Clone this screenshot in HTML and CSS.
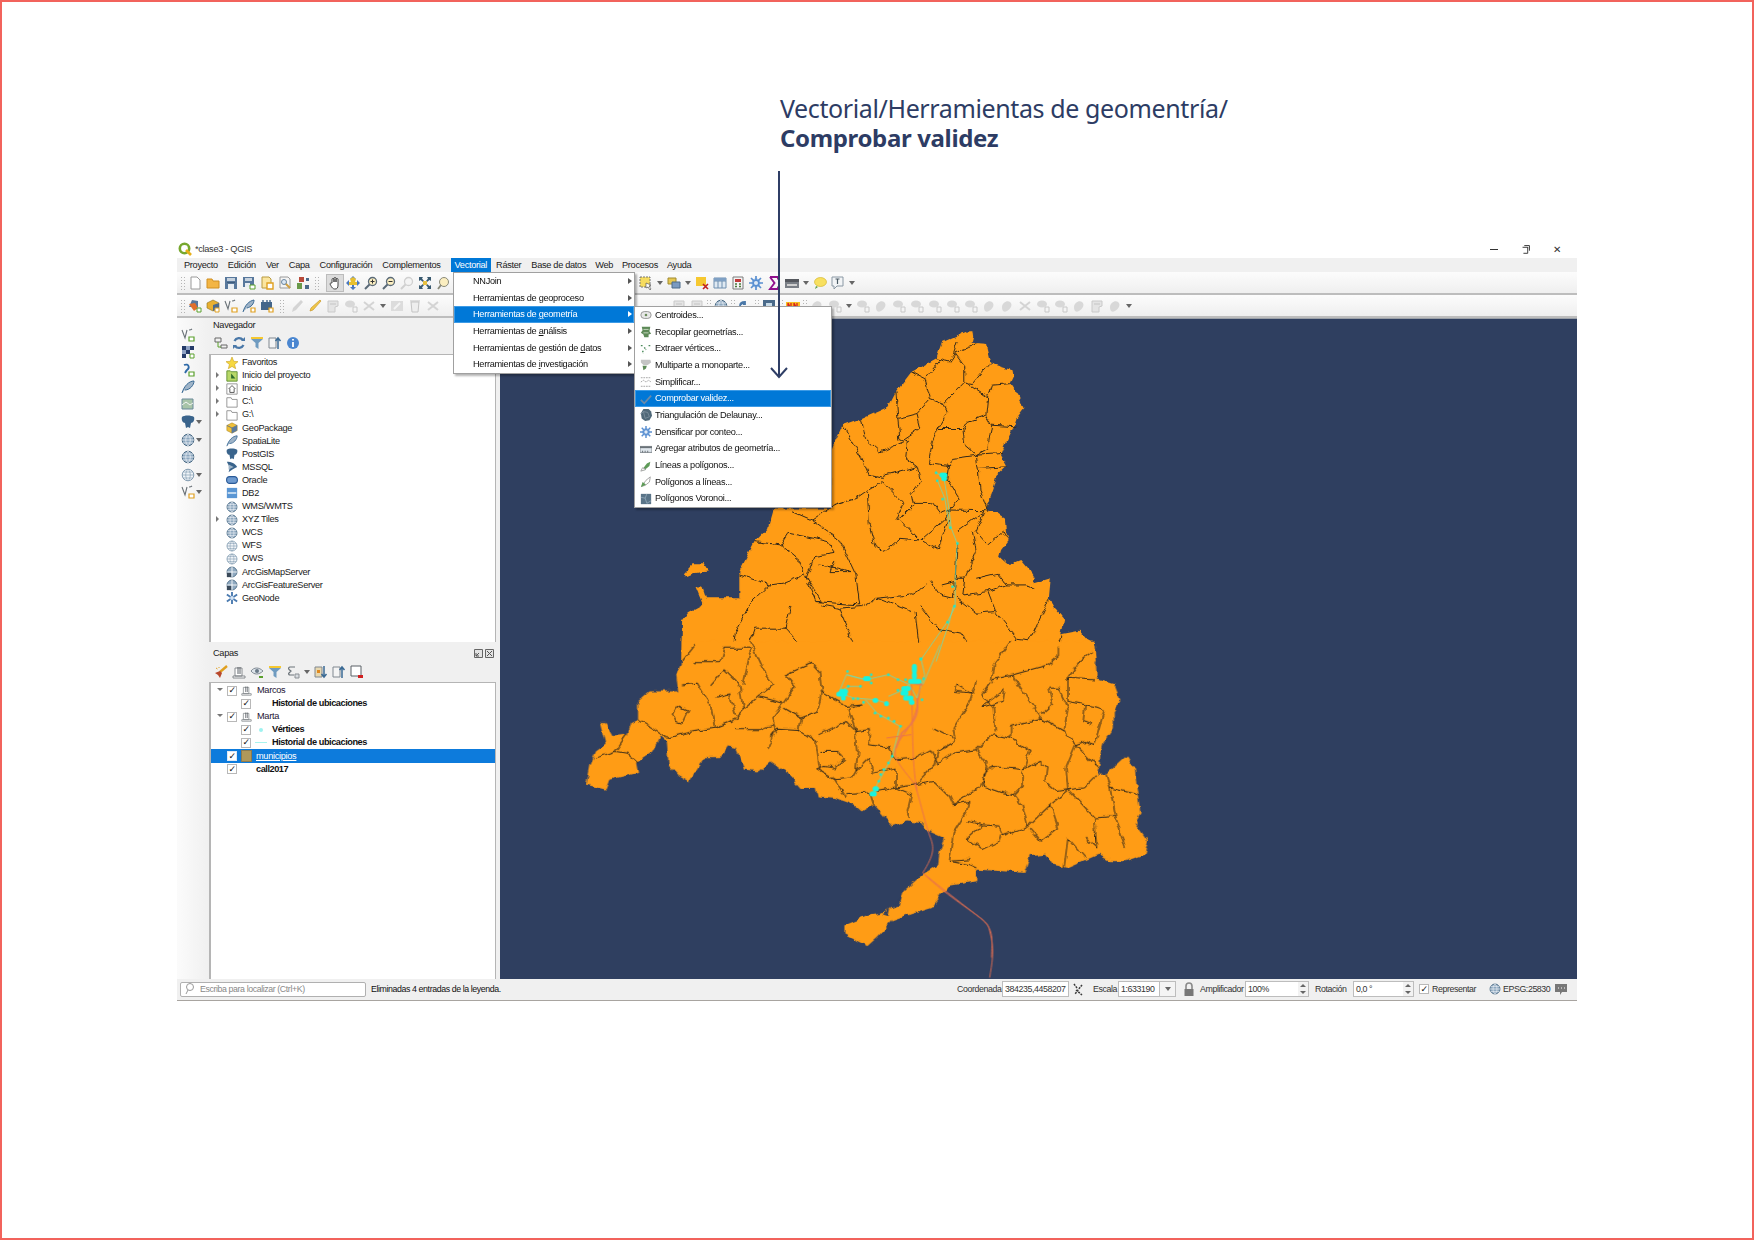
FILE: index.html
```html
<!DOCTYPE html>
<html lang="es">
<head>
<meta charset="utf-8">
<title>Comprobar validez</title>
<link rel="stylesheet" href="styles.css">
</head>
<body>
<svg class="sprite" aria-hidden="true">
<symbol id="doc" viewBox="0 0 14 14"><path d="M3 1h6l3 3v9H3z" fill="#fff" stroke="#9a9a9a"/></symbol>
<symbol id="folder" viewBox="0 0 14 14"><path d="M1 3h5l1 2h6v7H1z" fill="#f3b544" stroke="#d08f20"/></symbol>
<symbol id="save" viewBox="0 0 14 14"><path d="M1 1h12v12H1z" fill="#58789c"/><path d="M3 2h8v3H3z" fill="#c6d2de"/><path d="M4 8h6v5H4z" fill="#e8edf2"/><path d="M3 6h8v1H3z" fill="#3f5c7c"/></symbol>
<symbol id="saveas" viewBox="0 0 14 14"><path d="M1 1h11v10H1z" fill="#58789c"/><path d="M3 2h7v3H3z" fill="#c6d2de"/><path d="M3 7h5v4H3z" fill="#e8edf2"/><path d="M8 9h5v4H8z" fill="#fff" stroke="#5aa02c"/></symbol>
<symbol id="ydoc" viewBox="0 0 14 14"><path d="M2 1h7l2 2v9H2z" fill="#fbe6a0" stroke="#b89a40"/><path d="M7 7h6v6H7z" fill="#fff" stroke="#e0a020" stroke-width="1.400"/></symbol>
<symbol id="prop" viewBox="0 0 14 14"><path d="M2 1h8l2 2v9H2z" fill="#f4f4f4" stroke="#9a9a9a"/><path d="M6 6l6 6" stroke="#d0a040" stroke-width="2"/><circle cx="6" cy="6" r="2.500" fill="#dbe8f4" stroke="#6a86a0"/></symbol>
<symbol id="style" viewBox="0 0 14 14"><path d="M3 1h5v5H3z" fill="#b84a3a"/><path d="M1 7h5v6H1z" fill="#6a9a4a"/><path d="M10 2h3v3h-3zM9 9h4v4H9z" fill="#4a6a8a"/></symbol>
<symbol id="hand" viewBox="0 0 14 14"><path d="M4 7V3.500a1 1 0 0 1 2 0V6V2.500a1 1 0 0 1 2 0V6V3.500a1 1 0 0 1 2 0V9c0 3-1 4-3 4s-3-1-5-5c0-1 1-1 2-1z" fill="#fff" stroke="#333" stroke-width=".9"/></symbol>
<symbol id="move" viewBox="0 0 14 14"><path d="M7 0l3 3H8v3h3V4l3 3-3 3V8H8v3h2l-3 3-3-3h2V8H3v2L0 7l3-3v2h3V3H4z" fill="#4a78c0"/><path d="M4 3l3-2 3 2-1 3h2v3H3V6h2z" fill="#e8c030"/></symbol>
<symbol id="zin" viewBox="0 0 14 14"><circle cx="8.500" cy="5.500" r="4" fill="#fbeec0" stroke="#5a6a78" stroke-width="1.300"/><path d="M5.500 8.500L1 13" stroke="#5a6a78" stroke-width="2"/><path d="M6.500 5.500h4M8.500 3.500v4" stroke="#333"/></symbol>
<symbol id="zout" viewBox="0 0 14 14"><circle cx="8.500" cy="5.500" r="4" fill="#fbeec0" stroke="#5a6a78" stroke-width="1.300"/><path d="M5.500 8.500L1 13" stroke="#5a6a78" stroke-width="2"/><path d="M6.500 5.500h4" stroke="#333"/></symbol>
<symbol id="zdis" viewBox="0 0 14 14"><circle cx="8.500" cy="5.500" r="4" fill="#f4f4f4" stroke="#d0d0d0" stroke-width="1.300"/><path d="M5.500 8.500L1 13" stroke="#d0d0d0" stroke-width="2"/></symbol>
<symbol id="full" viewBox="0 0 14 14"><path d="M1 1h4L4 2.500 6 5 5 6 2.500 4 1 5zM13 1v4l-1.500-1L9 6 8 5l2-2.500L9 1zM1 13V9l1.500 1L5 8l1 1-2 2.500L5 13zM13 13H9l1-1.500L8 9l1-1 2.500 2L13 9z" fill="#3a5a70"/><path d="M5 5h4v4H5z" fill="#e8c040"/></symbol>
<symbol id="bubble" viewBox="0 0 14 14"><circle cx="8" cy="6" r="4.500" fill="#fbeec0" stroke="#8a8a7a"/><path d="M5 9l-3 4" stroke="#8a8a7a" stroke-width="1.800"/></symbol>
<symbol id="ybub" viewBox="0 0 14 14"><ellipse cx="7.500" cy="6" rx="6" ry="4.500" fill="#f8e060" stroke="#d0b020" stroke-width=".6"/><path d="M3 10l-1 3 3-2z" fill="#5a9a3a"/></symbol>
<symbol id="tbub" viewBox="0 0 14 14"><path d="M1 1h11v9H6l-3 3v-3H1z" fill="#f2f4f6" stroke="#8a98a4"/><path d="M4.500 3h4M6.500 3v5" stroke="#4a5a64" stroke-width="1.200"/></symbol>
<symbol id="selbox" viewBox="0 0 14 14"><path d="M1 1h10v10H1z" fill="#f6dc60" stroke="#777" stroke-dasharray="2 1"/><path d="M7 7l5 2-2 1 2 3-1 1-2-3-2 1z" fill="#fff" stroke="#444" stroke-width=".6"/></symbol>
<symbol id="layers" viewBox="0 0 14 14"><path d="M1 2h8v6H1z" fill="#e6c850" stroke="#a08a30"/><path d="M5 6h8v6H5z" fill="#7a9ac0" stroke="#4a6a8a"/></symbol>
<symbol id="addlay" viewBox="0 0 14 14"><path d="M4 1l6 1v6H1z" fill="#58789c"/><path d="M1 5l6-1 3 5-4 3z" fill="#e0702c"/><path d="M9 9h4v4H9z" fill="#fff" stroke="#5aa02c"/></symbol>
<symbol id="addgpkg" viewBox="0 0 14 14"><path d="M7 1l6 3v5l-6 3-6-3V4z" fill="#e8b030" stroke="#8a7020" stroke-width=".6"/><path d="M7 6l6-2v5l-6 3z" fill="#4a6a8c"/><path d="M9 9h4v4H9z" fill="#fff" stroke="#e0a020"/></symbol>
<symbol id="addfeather" viewBox="0 0 14 14"><path d="M1 13C3 6 7 2 12 1c0 4-3 7-7 8" fill="#9fb4c8" stroke="#3a6a94"/><path d="M9 9h4v4H9z" fill="#fff" stroke="#e0a020" stroke-width="1.200"/></symbol>
<symbol id="addtab" viewBox="0 0 14 14"><path d="M1 3h11v8H1z" fill="#44668a"/><path d="M3 1v3M7 1v3M10 1v3" stroke="#44668a" stroke-width="1.400"/><path d="M9 9h4v4H9z" fill="#fff" stroke="#e0a020" stroke-width="1.200"/></symbol>
<symbol id="ybox" viewBox="0 0 14 14"><path d="M1 1h10v9H1z" fill="#f6c830"/><path d="M8 8l5 5M13 8l-5 5" stroke="#c02020" stroke-width="1.600"/></symbol>
<symbol id="table" viewBox="0 0 14 14"><path d="M1 2h12v10H1z" fill="#dfe9f2" stroke="#6f8fb0"/><path d="M1 5h12M5 2v10M9 2v10" stroke="#6f8fb0"/><path d="M1 2h12v3H1z" fill="#7fa0c4"/></symbol>
<symbol id="calc" viewBox="0 0 14 14"><path d="M2 1h10v12H2z" fill="#f4f4f4" stroke="#7a7a7a"/><path d="M4 3h6v3H4z" fill="#c03a3a"/><path d="M4 8h2M8 8h2M4 10.500h2M8 10.500h2" stroke="#4a7a3a" stroke-width="1.400"/></symbol>
<symbol id="gear" viewBox="0 0 14 14"><circle cx="7" cy="7" r="3.800" fill="#5a8fd0" stroke="#8fb8e8" stroke-width="1.200"/><path d="M7 0v14M0 7h14M2 2l10 10M12 2L2 12" stroke="#5a8fd0" stroke-width="1.700"/><circle cx="7" cy="7" r="2" fill="#dfeaf6"/></symbol>
<symbol id="sigma" viewBox="0 0 14 14"><path d="M3 1h8v2.500M3 1l4.500 6L3 13h8v-2.500" fill="none" stroke="#90108c" stroke-width="1.900"/></symbol>
<symbol id="bar" viewBox="0 0 14 14"><path d="M0 3h14v9H0z" fill="#7a7f86"/><path d="M0 3h14v3H0z" fill="#55585e"/><path d="M2 8h10v2H2z" fill="#d0d0d0"/></symbol>
<symbol id="vadd" viewBox="0 0 14 14"><path d="M1 2l3 8 2-8M8 2c2 0 3-1 3-1" fill="none" stroke="#6a7278" stroke-width="1.100"/><path d="M8 9h5v4H8z" fill="#fff" stroke="#5aa02c" stroke-width="1.200"/></symbol>
<symbol id="vaddy" viewBox="0 0 14 14"><path d="M1 2l3 8 2-8M8 2c2 0 3-1 3-1" fill="none" stroke="#6a7278" stroke-width="1.100"/><path d="M8 9h5v4H8z" fill="#fff" stroke="#e0a020" stroke-width="1.200"/></symbol>
<symbol id="raster" viewBox="0 0 14 14"><path d="M1 1h4v4H1zM5 5h4v4H5zM1 9h4v4H1zM9 1h4v4H9z" fill="#243a68"/><path d="M5 1h4v4H5zM1 5h4v4H1z" fill="#8fa2c4"/><path d="M9 9h4v4H9z" fill="#fff" stroke="#5aa02c"/></symbol>
<symbol id="swirl" viewBox="0 0 14 14"><path d="M3 2c5-2 6 3 3 5 0 0-1 1-2 3" fill="none" stroke="#2f6aa8" stroke-width="1.800"/><path d="M8 9h5v4H8z" fill="#fff" stroke="#5aa02c" stroke-width="1.200"/></symbol>
<symbol id="feather" viewBox="0 0 14 14"><path d="M1 13C3 6 8 1 13 1c0 4-4 9-9 9" fill="#9fb4c8" stroke="#3a6a94"/></symbol>
<symbol id="vmesh" viewBox="0 0 14 14"><path d="M1 1h11v10H1z" fill="#a8c4a8" stroke="#6a8a9a"/><path d="M1 7l4-3 4 3 3-2" fill="none" stroke="#f4f4f4"/></symbol>
<symbol id="elephant" viewBox="0 0 14 14"><path d="M1 2c2-2 9-2 12 0 1 3-1 6-3 6l-1 5-2-1-2 1-1-5C2 8 0 5 1 2z" fill="#3a648c"/></symbol>
<symbol id="globe" viewBox="0 0 14 14"><circle cx="7" cy="7" r="5.800" fill="#8fa9c0" stroke="#4a6a84"/><path d="M1 7h12M7 1c-3 3-3 9 0 12M7 1c3 3 3 9 0 12M2 4h10M2 10h10" fill="none" stroke="#e8eef4" stroke-width=".8"/></symbol>
<symbol id="globeg" viewBox="0 0 14 14"><circle cx="7" cy="7" r="5.800" fill="#f0f4f8" stroke="#88a0b4"/><path d="M1 7h12M7 1c-3 3-3 9 0 12M7 1c3 3 3 9 0 12M2 4h10M2 10h10" fill="none" stroke="#88a0b4" stroke-width=".7"/></symbol>
<symbol id="star" viewBox="0 0 14 14"><path d="M7 0l2 5 5 .4-4 3.300 1.300 5L7 11l-4.300 2.700L4 8.700 0 5.400 5 5z" fill="#f6d840" stroke="#c8a020" stroke-width=".7"/></symbol>
<symbol id="proj" viewBox="0 0 14 14"><path d="M1 1h4l1 1h7v11H1z" fill="#b8d868" stroke="#5a8a2c"/><path d="M6 4l5 6H6z" fill="#2c6a2c"/></symbol>
<symbol id="home" viewBox="0 0 14 14"><path d="M1 1h12v12H1z" fill="#fff" stroke="#8a8a8a"/><path d="M3 7l4-4 4 4M4.500 6.500V11h5V6.500" fill="none" stroke="#444"/></symbol>
<symbol id="fold" viewBox="0 0 14 14"><path d="M1 2h5l1 2h6v9H1z" fill="#fff" stroke="#8a8a8a"/></symbol>
<symbol id="gpkg" viewBox="0 0 14 14"><path d="M7 1l6 3v6l-6 3-6-3V4z" fill="#f0c038" stroke="#a08020" stroke-width=".6"/><path d="M1 4l6 3 6-3M7 7v6" stroke="#58708a" fill="none"/><path d="M7 7l6-3v6l-6 3z" fill="#5a7a9c"/></symbol>
<symbol id="mssql" viewBox="0 0 14 14"><path d="M1 1c5 0 10 2 12 6-3 1-7 4-10 6 1-3 2-6 0-8z" fill="#3a648c"/><path d="M3 4l6 3-6 3z" fill="#9fb4c8"/></symbol>
<symbol id="oracle" viewBox="0 0 14 14"><rect x=".7" y="3" width="12.600" height="8" rx="3.600" fill="#6f9bd0" stroke="#2a5a98" stroke-width="1.300"/></symbol>
<symbol id="db2" viewBox="0 0 14 14"><path d="M1 1h12v12H1z" fill="#5a96d4"/><path d="M2 6h10v2H2z" fill="#cfe2f4"/></symbol>
<symbol id="mapserv" viewBox="0 0 14 14"><circle cx="7" cy="7" r="5.800" fill="#8fa9c0" stroke="#4a6a84"/><path d="M1 7h12M7 1v12" stroke="#fff"/><path d="M1 8h5v5H1z" fill="#3a4a5a"/></symbol>
<symbol id="node" viewBox="0 0 14 14"><path d="M7 0v14M1 3l12 8M13 3L1 11" stroke="#4a7ab0" stroke-width="2.200"/><circle cx="7" cy="7" r="2.200" fill="#d4e4f4"/></symbol>
<symbol id="group" viewBox="0 0 14 14"><path d="M1 11h12v2H1zM3 3h7v8H3z" fill="#fff" stroke="#7a7f84" stroke-width=".9"/><path d="M6 2v7M8 2v7" stroke="#5a6066"/></symbol>
<symbol id="filter" viewBox="0 0 14 14"><path d="M1 1h12v2L8.500 7v6l-3-2V7L1 3z" fill="#6f9bc0"/><path d="M1 1h12v2H1z" fill="#f6c830"/></symbol>
<symbol id="refresh" viewBox="0 0 14 14"><path d="M11 4A5 5 0 0 0 2.500 5M3 10a5 5 0 0 0 8.500-1" fill="none" stroke="#4a78a8" stroke-width="2.200"/><path d="M9 5h4V1zM5 9H1v4z" fill="#4a78a8"/></symbol>
<symbol id="info" viewBox="0 0 14 14"><circle cx="7" cy="7" r="6" fill="#4a86d0"/><path d="M7 3v1.500M7 6v5" stroke="#fff" stroke-width="1.800"/></symbol>
<symbol id="collapse" viewBox="0 0 14 14"><path d="M1 2h6v4H1zM7 9h6v3H7z" fill="none" stroke="#666"/><path d="M4 6v5h3" fill="none" stroke="#5aa02c"/></symbol>
<symbol id="expandall" viewBox="0 0 14 14"><path d="M1 2h7v10H1z" fill="#f4f4f4" stroke="#808890"/><path d="M10 13V3M7.500 5L10 2l2.500 3" fill="none" stroke="#3a6a94" stroke-width="1.500"/></symbol>
<symbol id="collall" viewBox="0 0 14 14"><path d="M1 2h7v10H1z" fill="#e8d8b0" stroke="#808890"/><path d="M10 1v10M7.500 9l2.500 3 2.500-3" fill="none" stroke="#3a6a94" stroke-width="1.500"/><path d="M3 5h3v3H3z" fill="#e08a20"/></symbol>
<symbol id="brush" viewBox="0 0 14 14"><path d="M13 1L6 7" stroke="#e0a020" stroke-width="2.400"/><path d="M1 8l5-2 2 2-2 5-2-3z" fill="#b8482c"/><path d="M2 3l1.500 1M5 2v1" stroke="#e0a020"/></symbol>
<symbol id="eye" viewBox="0 0 14 14"><path d="M1 6c3-4 8-4 12 0-4 4-9 4-12 0z" fill="#dde4ea" stroke="#808a94"/><circle cx="7" cy="6" r="2" fill="#6a7a88"/><path d="M9 11h4v2H9z" fill="#5aa02c"/></symbol>
<symbol id="expr" viewBox="0 0 14 14"><path d="M9 2H4c-1 0-2 1-1 2.500L5 6 3 8c-1 1 0 2 1 2h4" fill="none" stroke="#6a7278" stroke-width="1.200"/><path d="M9 9h4v4H9z" fill="#d8dce0" stroke="#8a8f94"/></symbol>
<symbol id="rembox" viewBox="0 0 14 14"><path d="M1 1h10v10H1z" fill="#fff" stroke="#5a6066"/><path d="M8 10h5v3H8z" fill="#d02020"/></symbol>
<symbol id="g1" viewBox="0 0 14 14"><ellipse cx="6" cy="5" rx="5" ry="3.600" fill="#d8d8d8"/><path d="M9 8h4v5H9z" fill="#f4f4f4" stroke="#c8c8c8"/></symbol>
<symbol id="g2" viewBox="0 0 14 14"><path d="M2 8c0-4 5-7 8-5s1 7-3 9-5-1-5-4z" fill="#d8d8d8"/></symbol>
<symbol id="g3" viewBox="0 0 14 14"><path d="M2 2h10v5l-3 1v5H2z" fill="#e4e4e4" stroke="#cacaca"/><path d="M4 5h6" stroke="#c4c4c4"/></symbol>
<symbol id="g4" viewBox="0 0 14 14"><path d="M2 3l10 8M2 11l10-8" fill="none" stroke="#d4d4d4" stroke-width="2"/></symbol>
<symbol id="gpen" viewBox="0 0 14 14"><path d="M11 1l2 2-7 8-4 2 1-4z" fill="#d4d4d4"/></symbol>
<symbol id="gsq" viewBox="0 0 14 14"><path d="M1 2h12v10H1z" fill="#dcdcdc"/><path d="M4 10l6-6" stroke="#f4f4f4" stroke-width="2"/></symbol>
<symbol id="pencil" viewBox="0 0 14 14"><path d="M12 1l1 1-8 9-3 1 1-3z" fill="#f0c848" stroke="#c8982c" stroke-width=".7"/></symbol>
<symbol id="trash" viewBox="0 0 14 14"><path d="M3 3h8l-1 10H4zM2 2h10" fill="#eee" stroke="#c4c4c4"/></symbol>
<symbol id="python" viewBox="0 0 14 14"><path d="M2 7c0-3 2-4 5-4v2H5" fill="#4a78a8" stroke="#4a78a8" stroke-width="1.800"/><path d="M12 7c0 3-2 4-5 4V9h2" fill="#f0c838" stroke="#f0c838" stroke-width="1.800"/></symbol>
<symbol id="bluebox" viewBox="0 0 14 14"><path d="M1 1h12v12H1z" fill="#4a6a8a"/><path d="M4 4h6v6H4z" fill="#c8dbe8"/></symbol>
<symbol id="nn" viewBox="0 0 14 14"><path d="M0 3h14v8H0z" fill="#f8c020"/><path d="M2 10V4l3 6V4M8 10V4l3 6V4" fill="none" stroke="#d82020" stroke-width="1.300"/></symbol>
<symbol id="centroid" viewBox="0 0 14 14"><rect x="1" y="3" width="12" height="8" rx="4" fill="#e8e8e8" stroke="#8a8a8a"/><circle cx="7" cy="7" r="1.500" fill="#6a8a5a"/></symbol>
<symbol id="collect" viewBox="0 0 14 14"><path d="M2 1h10l-1 5 2 3-3 1v3H5l-1-3-3-2 2-3z" fill="#5e8a58"/><path d="M4 4h6M4 8h6" stroke="#cfe0c8"/></symbol>
<symbol id="verts" viewBox="0 0 14 14"><path d="M1 3h2M5 5l2 3M10 3h3M3 9l1 3" stroke="#4a8a5a" stroke-width="1.600" stroke-dasharray="2 1"/></symbol>
<symbol id="multi" viewBox="0 0 14 14"><path d="M1 1h11l1 3-4 3H4L1 4z" fill="#c4c4c4"/><path d="M3 8h5l-1 3-3 2z" fill="#5e8a58"/></symbol>
<symbol id="simp" viewBox="0 0 14 14"><path d="M1 2h12M1 7l3-2 3 2 3-2 3 2M1 12h12" fill="none" stroke="#9a9a9a" stroke-dasharray="2 1"/></symbol>
<symbol id="check" viewBox="0 0 14 14"><path d="M1 8l4 4 8-9" fill="none" stroke="#6a8aa8" stroke-width="2"/></symbol>
<symbol id="tri" viewBox="0 0 14 14"><path d="M4 0h6l3 3 1 5-3 5-5 1-4-3-1-6z" fill="#4f6878"/><path d="M4 3l5 1 2 5-5 2zM4 3L1 6" stroke="#8fa0ac" fill="none" stroke-width=".7"/></symbol>
<symbol id="attrs" viewBox="0 0 14 14"><path d="M0 4h14v7H0z" fill="#dfe6ec" stroke="#7a8288"/><path d="M0 4h14v2H0z" fill="#6a7278"/><path d="M3 9v2M6 9v2M9 9v2" stroke="#5a6268"/></symbol>
<symbol id="linepoly" viewBox="0 0 14 14"><path d="M2 12L8 4l4-2-1 5-6 5z" fill="#5e9a58"/><path d="M1 13l2-4 4 2z" fill="#fff" stroke="#9a9a9a"/></symbol>
<symbol id="polyline" viewBox="0 0 14 14"><path d="M2 12L7 5l5-4-1 6-5 4z" fill="#fff" stroke="#9a9a9a"/><path d="M1 13l2-6 4 3z" fill="#5e9a58"/></symbol>
<symbol id="voronoi" viewBox="0 0 14 14"><path d="M1 1h12v12H1z" fill="#5a7488"/><path d="M1 5l5 1 2-5M6 6l2 6M8 12l5-3" stroke="#9fb4c4" fill="none" stroke-width=".8"/></symbol>
<symbol id="lock" viewBox="0 0 14 14"><path d="M4 7V4a3 3 0 0 1 6 0v3" fill="none" stroke="#8a8a8a" stroke-width="1.600"/><rect x="2.500" y="7" width="9" height="7" fill="#777"/></symbol>
<symbol id="ctrans" viewBox="0 0 14 14"><path d="M2 2l3 4M10 3l-4 5-3 4M4 8l6 5" fill="none" stroke="#3a3a3a" stroke-width="1.500" stroke-dasharray="2 1"/></symbol>
<symbol id="msg" viewBox="0 0 14 14"><path d="M1 2h12v8H8l-2 3v-3H1z" fill="#777"/><path d="M4 6h1M7 6h1M10 6h1" stroke="#fff"/></symbol>
<symbol id="search" viewBox="0 0 14 14"><circle cx="7" cy="5" r="3.500" fill="none" stroke="#999"/><path d="M5 8l-2 4" stroke="#999"/></symbol>
<symbol id="qgis" viewBox="0 0 14 14"><circle cx="6.500" cy="6.500" r="4.700" fill="none" stroke="#77a82e" stroke-width="2.600"/><path d="M8 8l5 5" stroke="#e8b018" stroke-width="2.600"/></symbol>
<symbol id="restore" viewBox="0 0 14 14"><path d="M3 5h6v1M4 12h5V5M5 3h6v6" fill="none" stroke="#333" stroke-width="1.100"/></symbol>
<symbol id="dockx" viewBox="0 0 9 9"><path d="M.5.500h8v8h-8z" fill="#e4e4e4" stroke="#666"/><path d="M2 2l5 5M7 2L2 7" stroke="#555"/></symbol>
<symbol id="dockf" viewBox="0 0 9 9"><path d="M.5.500h8v8h-8z" fill="#e4e4e4" stroke="#666"/><path d="M2 7l3-3M2 4v3h3" fill="none" stroke="#555"/></symbol>
</svg>

<main class="page">
  <header class="caption">
    <p class="caption-line">Vectorial/Herramientas de geomentría/</p>
    <p class="caption-strong">Comprobar validez</p>
  </header>

  <svg class="pointer" viewBox="0 0 20 208" aria-hidden="true"><path d="M10 0V206M2 197l8 9 8-9" fill="none" stroke="#2f3e66" stroke-width="2"/></svg>

  <section class="window">
    <div class="titlebar">
      <svg class="ic"><use href="#qgis"/></svg>
      <span class="title-text">*clase3 - QGIS</span>
      <span class="winbtns">
        <span class="wb-min"></span>
        <svg class="ic"><use href="#restore"/></svg>
        <span class="wb-close">✕</span>
      </span>
    </div>
    <nav class="menubar">
      <span>Proyecto</span><span>Edición</span><span>Ver</span><span>Capa</span><span>Configuración</span><span>Complementos</span><span class="on">Vectorial</span><span>Ráster</span><span>Base de datos</span><span class="tight">Web</span><span class="tight">Procesos</span><span class="tight">Ayuda</span>
    </nav>

    <div class="toolbar">
      <i class="hdl"></i>
      <b class="c"><svg class="ic"><use href="#doc"/></svg></b><b class="c"><svg class="ic"><use href="#folder"/></svg></b><b class="c"><svg class="ic"><use href="#save"/></svg></b><b class="c"><svg class="ic"><use href="#saveas"/></svg></b><b class="c"><svg class="ic"><use href="#ydoc"/></svg></b><b class="c"><svg class="ic"><use href="#prop"/></svg></b><b class="c"><svg class="ic"><use href="#style"/></svg></b>
      <i class="hdl wide"></i>
      <b class="c sel"><svg class="ic"><use href="#hand"/></svg></b><b class="c"><svg class="ic"><use href="#move"/></svg></b><b class="c"><svg class="ic"><use href="#zin"/></svg></b><b class="c"><svg class="ic"><use href="#zout"/></svg></b><b class="c"><svg class="ic"><use href="#zdis"/></svg></b><b class="c"><svg class="ic"><use href="#full"/></svg></b><b class="c"><svg class="ic"><use href="#bubble"/></svg></b>
      <span class="gap-a"></span>
      <b class="c"><svg class="ic"><use href="#selbox"/></svg></b><i class="car"></i><b class="c"><svg class="ic"><use href="#layers"/></svg></b><i class="car"></i><b class="c"><svg class="ic"><use href="#ybox"/></svg></b><b class="c"><svg class="ic"><use href="#table"/></svg></b><b class="c"><svg class="ic"><use href="#calc"/></svg></b><b class="c"><svg class="ic"><use href="#gear"/></svg></b><b class="c"><svg class="ic"><use href="#sigma"/></svg></b><b class="c"><svg class="ic"><use href="#bar"/></svg></b><i class="car"></i><b class="c"><svg class="ic"><use href="#ybub"/></svg></b><b class="c"><svg class="ic"><use href="#tbub"/></svg></b><i class="car"></i>
    </div>

    <div class="toolbar">
      <i class="hdl"></i>
      <b class="c"><svg class="ic"><use href="#addlay"/></svg></b><b class="c"><svg class="ic"><use href="#addgpkg"/></svg></b><b class="c"><svg class="ic"><use href="#vaddy"/></svg></b><b class="c"><svg class="ic"><use href="#addfeather"/></svg></b><b class="c"><svg class="ic"><use href="#addtab"/></svg></b>
      <i class="hdl wide2"></i>
      <b class="c"><svg class="ic"><use href="#gpen"/></svg></b><b class="c"><svg class="ic"><use href="#pencil"/></svg></b><b class="c"><svg class="ic"><use href="#g3"/></svg></b><b class="c"><svg class="ic"><use href="#g1"/></svg></b><b class="c"><svg class="ic"><use href="#g4"/></svg></b><i class="car"></i><b class="c"><svg class="ic"><use href="#gsq"/></svg></b><b class="c"><svg class="ic"><use href="#trash"/></svg></b><b class="c"><svg class="ic"><use href="#g4"/></svg></b>
      <span class="gap-b"></span>
      <b class="c"><svg class="ic"><use href="#g3"/></svg></b><b class="c"><svg class="ic"><use href="#g3"/></svg></b><i class="hdl"></i>
      <b class="c"><svg class="ic"><use href="#globe"/></svg></b><i class="hdl"></i><b class="c"><svg class="ic"><use href="#python"/></svg></b><i class="hdl"></i><b class="c"><svg class="ic"><use href="#bluebox"/></svg></b><i class="hdl"></i><b class="c"><svg class="ic"><use href="#nn"/></svg></b><i class="hdl"></i>
      <b class="c"><svg class="ic"><use href="#g2"/></svg></b><b class="c"><svg class="ic"><use href="#g1"/></svg></b><i class="car"></i><b class="c"><svg class="ic"><use href="#g1"/></svg></b><b class="c"><svg class="ic"><use href="#g2"/></svg></b><b class="c"><svg class="ic"><use href="#g1"/></svg></b><b class="c"><svg class="ic"><use href="#g1"/></svg></b><b class="c"><svg class="ic"><use href="#g1"/></svg></b><b class="c"><svg class="ic"><use href="#g1"/></svg></b><b class="c"><svg class="ic"><use href="#g1"/></svg></b><b class="c"><svg class="ic"><use href="#g2"/></svg></b><b class="c"><svg class="ic"><use href="#g2"/></svg></b><b class="c"><svg class="ic"><use href="#g4"/></svg></b><b class="c"><svg class="ic"><use href="#g1"/></svg></b><b class="c"><svg class="ic"><use href="#g1"/></svg></b><b class="c"><svg class="ic"><use href="#g2"/></svg></b><b class="c"><svg class="ic"><use href="#g3"/></svg></b><b class="c"><svg class="ic"><use href="#g2"/></svg></b><i class="car"></i>
    </div>

    <div class="workspace">
      <aside class="dock">
        <b class="dc"><svg class="ic"><use href="#vadd"/></svg></b>
        <b class="dc"><svg class="ic"><use href="#raster"/></svg></b>
        <b class="dc"><svg class="ic"><use href="#swirl"/></svg></b>
        <b class="dc"><svg class="ic"><use href="#feather"/></svg></b>
        <b class="dc"><svg class="ic"><use href="#vmesh"/></svg></b>
        <b class="dc"><svg class="ic"><use href="#elephant"/></svg><i class="car"></i></b>
        <b class="dc"><svg class="ic"><use href="#globe"/></svg><i class="car"></i></b>
        <b class="dc"><svg class="ic"><use href="#globe"/></svg></b>
        <b class="dc"><svg class="ic"><use href="#globeg"/></svg><i class="car"></i></b>
        <b class="dc"><svg class="ic"><use href="#vaddy"/></svg><i class="car"></i></b>
      </aside>

      <div class="panels">
        <section class="panel panel-nav">
          <h2 class="panel-title">Navegador</h2>
          <div class="panel-tools">
            <b class="c"><svg class="ic"><use href="#collapse"/></svg></b><b class="c"><svg class="ic"><use href="#refresh"/></svg></b><b class="c"><svg class="ic"><use href="#filter"/></svg></b><b class="c"><svg class="ic"><use href="#expandall"/></svg></b><b class="c"><svg class="ic"><use href="#info"/></svg></b>
          </div>
          <ul class="tree">
            <li><i class="tw"></i><svg class="ic"><use href="#star"/></svg>Favoritos</li>
            <li><i class="tw r"></i><svg class="ic"><use href="#proj"/></svg>Inicio del proyecto</li>
            <li><i class="tw r"></i><svg class="ic"><use href="#home"/></svg>Inicio</li>
            <li><i class="tw r"></i><svg class="ic"><use href="#fold"/></svg>C:\</li>
            <li><i class="tw r"></i><svg class="ic"><use href="#fold"/></svg>G:\</li>
            <li><i class="tw"></i><svg class="ic"><use href="#gpkg"/></svg>GeoPackage</li>
            <li><i class="tw"></i><svg class="ic"><use href="#feather"/></svg>SpatiaLite</li>
            <li><i class="tw"></i><svg class="ic"><use href="#elephant"/></svg>PostGIS</li>
            <li><i class="tw"></i><svg class="ic"><use href="#mssql"/></svg>MSSQL</li>
            <li><i class="tw"></i><svg class="ic"><use href="#oracle"/></svg>Oracle</li>
            <li><i class="tw"></i><svg class="ic"><use href="#db2"/></svg>DB2</li>
            <li><i class="tw"></i><svg class="ic"><use href="#globe"/></svg>WMS/WMTS</li>
            <li><i class="tw r"></i><svg class="ic"><use href="#globe"/></svg>XYZ Tiles</li>
            <li><i class="tw"></i><svg class="ic"><use href="#globe"/></svg>WCS</li>
            <li><i class="tw"></i><svg class="ic"><use href="#globeg"/></svg>WFS</li>
            <li><i class="tw"></i><svg class="ic"><use href="#globeg"/></svg>OWS</li>
            <li><i class="tw"></i><svg class="ic"><use href="#mapserv"/></svg>ArcGisMapServer</li>
            <li><i class="tw"></i><svg class="ic"><use href="#mapserv"/></svg>ArcGisFeatureServer</li>
            <li><i class="tw"></i><svg class="ic"><use href="#node"/></svg>GeoNode</li>
          </ul>
        </section>
        <section class="panel panel-layers">
          <h2 class="panel-title">Capas<span class="panel-btns"><svg><use href="#dockf"/></svg><svg><use href="#dockx"/></svg></span></h2>
          <div class="panel-tools">
            <b class="c"><svg class="ic"><use href="#brush"/></svg></b><b class="c"><svg class="ic"><use href="#group"/></svg></b><b class="c"><svg class="ic"><use href="#eye"/></svg></b><b class="c"><svg class="ic"><use href="#filter"/></svg></b><b class="c"><svg class="ic"><use href="#expr"/></svg></b><i class="car"></i><b class="c"><svg class="ic"><use href="#collall"/></svg></b><b class="c"><svg class="ic"><use href="#expandall"/></svg></b><b class="c"><svg class="ic"><use href="#rembox"/></svg></b>
          </div>
          <ul class="legend">
            <li><i class="tw d"></i><i class="cb">✓</i><svg class="ic"><use href="#group"/></svg><span class="nm">Marcos</span></li>
            <li class="lv2"><i class="cb">✓</i><span class="sym"></span><span class="nm strong">Historial de ubicaciones</span></li>
            <li><i class="tw d"></i><i class="cb">✓</i><svg class="ic"><use href="#group"/></svg><span class="nm">Marta</span></li>
            <li class="lv2"><i class="cb">✓</i><span class="sym"><em class="pt"></em></span><span class="nm strong">Vértices</span></li>
            <li class="lv2"><i class="cb">✓</i><span class="sym"><em class="ln"></em></span><span class="nm strong">Historial de ubicaciones</span></li>
            <li class="selrow"><i class="tw"></i><i class="cb">✓</i><span class="swatch"></span><span class="nm cur">municipios</span></li>
            <li><i class="tw"></i><i class="cb">✓</i><span class="blank"></span><span class="nm strong">call2017</span></li>
          </ul>
        </section>
      </div>

      <div class="map">
        <svg class="map-svg" viewBox="500 317 1076 661" aria-hidden="true">
          <filter id="rough" x="-2%" y="-2%" width="104%" height="104%" color-interpolation-filters="sRGB">
            <feTurbulence type="fractalNoise" baseFrequency=".12" numOctaves="2" seed="7"/>
            <feDisplacementMap in="SourceGraphic" scale="6" xChannelSelector="R" yChannelSelector="G"/>
          </filter>
          <g class="rough">
          <g transform="translate(570 310) scale(.3827 .3333)">
            <path class="land" d="M1050 55 1052 75 1048 92 1085 95 1092 130 1097 155 1155 175 1158 195 1150 215 1170 250 1186 288 1165 320 1158 345 1135 400 1125 430 1140 462 1115 490 1108 520 1085 595 1115 605 1135 620 1138 665 1145 685 1125 715 1120 735 1145 760 1178 745 1200 775 1213 800 1210 815 1255 800 1250 860 1268 895 1290 925 1282 968 1330 958 1350 985 1372 1000 1375 1050H288L290 930 305 905 345 880 325 825 340 825 350 860 440 860 440 780 480 690 515 650 530 590 680 590 680 420 690 390 710 340 760 320 830 285 850 240 890 180 955 140 970 90 1040 55z"/>
            <path class="land" d="M295 785 320 755 345 755 358 780 320 785 300 795z"/>
            <path class="bound" d="M1010 90 1000 125 1030 110 1060 95M955 140 990 150 1005 125 1030 165 1030 210 1050 215 1095 155M890 180 925 200 970 140M925 200 940 260 975 275 1030 210M850 240 855 320 905 305 940 260M855 320 860 380 870 385 915 350 905 305M1030 210 1090 255 1100 220 1150 215M1090 255 1085 310 1035 330 1025 350 1030 400 1060 430 1130 425M1085 310 1100 340 1165 345M1100 340 1090 410 1060 430M975 275 985 300 960 350 1025 350M960 350 945 390 935 455 990 465M990 465 1000 440 1060 430 1065 470 1140 465M1065 470 1070 535 1090 600M990 465 985 505 1015 560 990 595 1085 597M710 340 760 440 780 490 815 500 820 490 905 465 915 510 890 545 895 575 945 575 965 605 990 595M760 320 770 380 810 420 880 385M880 385 875 440 905 465M815 510 770 540 745 560 680 585 630 625 580 600M815 510 870 575 850 630 895 580M775 540 780 640 795 705 820 720 860 680 910 685 860 625M630 625 700 680 745 790 755 880 640 870M990 595 975 625 915 685 960 715 985 625M1010 660 1080 600 1060 660 1090 700 1130 660 1140 680M1010 695 1005 800 1030 800 1060 720 1050 660M1030 800 1025 850 1090 840 1140 820 1115 785 1060 800M1140 820 1190 820 1210 830M1090 840 1110 900 1165 980 1200 985 1250 860M1110 900 1060 905 1010 860M940 810 965 850 1000 860 1005 810 970 820M915 885 960 950 1020 965M1020 965 1040 1000 1060 1050M900 900 910 1000 950 1050M1165 980 1145 1050M1285 970 1270 1020 1310 1030M640 870 615 800 635 735 690 725 670 690 635 680 570 665 550 700 480 690M550 700 600 750 610 790 555 815 520 820 440 790M610 790 655 870 640 870M520 820 465 880 430 960 420 1050M575 880 560 950 480 950 450 1050M560 950 600 1000 610 1050M655 880 700 890 740 1000 760 1050M700 890 760 885 800 860 890 900M650 760 700 770 730 780 680 780 690 745M800 860 890 850 930 820"/>
          </g>
          <g transform="translate(570 640) scale(.3827 .3333)">
            <path class="land" d="M1372 0 1375 110 1420 125 1437 175 1420 210 1420 260 1395 300 1385 340 1380 400 1400 400 1455 342 1475 380 1480 440 1490 515 1475 545 1510 600 1500 640 1450 660 1410 660 1380 640 1300 680 1260 670 1240 640 1200 645 1185 695 1130 690 1060 685 1060 720 985 735 950 790 945 800 890 820 840 840 800 890 775 915 715 880 715 850 780 820 810 815 860 790 870 750 920 700 960 670 965 630 975 590 935 570 915 545 875 540 840 555 790 490 760 510 740 490 690 470 645 465 640 440 600 440 570 400 520 360 490 390 455 385 430 320 410 315 390 350 350 350 310 420 280 400 255 370 250 300 235 285 215 330 170 365 175 395 100 415 90 445 40 430 50 370 65 330 90 310 75 245 90 245 110 285 145 280 155 245 175 235 175 180 205 150 280 150 275 100 290 60 290 0z"/>
            <path class="hole" d="M815 820 835 800 830 825zM845 790 860 770 860 795z"/>
            <path class="bound" d="M290 130 330 125 365 190 375 260 320 270 250 290M365 130 400 85 440 130 450 205 420 240 375 260M380 170 415 160 430 220M175 235 210 260 250 290M145 280 115 330 65 350M115 330 145 335 175 365M290 60 325 10M320 60 390 60 400 20 470 20 450 130M470 0 510 100 530 130 490 165 450 205M490 165 555 185 525 230 535 265 515 320M425 265 490 265 530 250M555 185 585 135 560 100 630 65 650 90 655 150 645 210 600 230 555 200M600 230 595 265 640 300 650 380M600 265 540 260 520 290M650 150 720 195 760 190 725 205 745 270 780 265 780 310 835 320M650 280 720 240 745 270 750 330 745 390 780 350 790 395 850 380 850 440M655 330 700 330 715 350 690 380 660 375 645 385M645 385 690 415 720 470M690 415 735 410 745 390M720 460 780 455 790 490M800 450 850 440 890 460 880 510 885 530M850 440 950 420 990 465 1000 490 1065 440M900 430 950 370 960 330 1005 300 1000 260 1040 190 1060 120M950 260 1000 290M830 320 850 355 900 350 940 325 960 365 1000 335 1060 325 1090 375 1075 430 1065 440M1060 325 1105 280 1150 290 1200 330 1185 385 1100 375M1100 375 1080 400 1080 435 1130 455 1160 460 1180 435 1180 390M1185 385 1225 360 1245 380 1240 420 1270 450 1300 445 1295 380 1320 310 1295 280 1290 270 1230 230 1150 255 1150 290M1230 230 1175 140 1155 100 1100 115 1105 70 1150 0M1155 100 1250 70 1275 45 1275 15M1075 195 1135 145 1130 180 1085 195 1075 195M1230 220 1260 190 1250 140 1275 140 1300 200 1290 270M1300 110 1370 115M1300 110 1300 180 1345 190 1370 195 1395 205 1370 310 1345 300 1320 310 1380 380M1345 190 1340 240 1365 250M1300 445 1340 440 1375 400M1410 440 1485 460M1410 440 1400 400M1160 460 1180 490 1195 555 1130 580 1120 555 1075 550 1035 590 1075 625 1120 600 1125 580M1195 555 1255 490 1275 560 1230 600 1200 560M1255 490 1300 445 1330 480 1370 530 1375 620 1345 590M1370 530 1425 525 1450 620M1425 525 1410 440M1300 590 1290 680M1300 590 1345 650M1000 490 1040 480 1035 510 1000 575 990 660 1040 670 1060 680M995 660 1045 655M1075 550 1040 540M1010 130 1050 155 1060 120M1010 130 1005 150 1055 155M265 215 275 195 305 210 290 245 275 240zM1100 120 1075 160 1105 200 1110 270M1300 110 1330 60 1365 30"/>
          </g>
          </g>
          <g transform="translate(570 310) scale(.3827 .3333)">
            <path class="trk-cy" d="M955 483 975 495 985 560 995 650 1010 695 1005 800 1005 885 985 930 915 1045M958 505 978 560 990 648M1000 885 990 930 955 1050"/>
            <path class="dot-cy" d="M955 483h0M958 507h0M972 562h0M992 648h0M1011 695h0M998 825h0M1003 884h0M985 932h0M915 1043h0"/>
            <path class="dot-big" d="M970 490h8M975 500h2"/>
          </g>
          <g transform="translate(570 640) scale(.3827 .3333)">
            <path class="trk-cy" d="M915 50 925 100 905 170 885 130 830 100 770 115 720 100 700 155 740 170 795 175 825 185M770 175 800 215 860 255 840 345 800 430 790 460M890 125 860 150 830 165M965 10 920 130M720 100 770 115M700 155 725 135 757 135"/>
            <path class="trk-red" d="M915 125C905 180 910 220 870 280S845 350 900 430C915 490 930 560 940 590S950 640 920 695C950 730 985 760 1040 805S1090 850 1095 870C1110 930 1100 970 1095 1010M890 130C895 250 890 360 905 450M825 290 890 280M925 700C985 755 1030 795 1070 830S1100 900 1100 950"/>
            <path class="trk-thick" d="M885 125 920 130M905 170C910 210 905 240 865 275L850 320"/>
            <path class="dot-cy" d="M723 90h0M830 100h0M785 100h0M757 135h0M725 135h0M785 125h0M915 52h0M922 112h0M918 175h0M845 240h0M862 255h0M830 230h0M810 225h0M795 215h0M840 345h0M830 365h0M818 385h0M810 400h0M805 420h0M795 440h0M855 115h0M875 115h0M765 183h0M738 172h0M750 172h0M855 147h0"/>
            <path class="dot-big" d="M700 158h16M708 150h10M712 170h0M770 112h8M795 177h2M825 187h0M870 142h12M868 155h8M875 170h14M890 183h2M898 75v14M888 120h22M898 100v6M787 458h6M795 443h4"/>
          </g>
        </svg>
      </div>
    </div>

    <footer class="status">
      <label class="locator"><svg class="ic"><use href="#search"/></svg>Escriba para localizar (Ctrl+K)</label>
      <span class="msg">Eliminadas 4 entradas de la leyenda.</span>
      <span class="st-coord">Coordenada</span><span class="box w-coord">384235,4458207</span>
      <svg class="ic st-ct"><use href="#ctrans"/></svg>
      <span class="st-esc">Escala</span><span class="box w-scale">1:633190<i class="combo"></i></span>
      <svg class="ic st-lock"><use href="#lock"/></svg>
      <span class="st-amp">Amplificador</span><span class="box w-mag">100%<i class="spin"></i></span>
      <span class="st-rot">Rotación</span><span class="box w-rot">0,0 °<i class="spin"></i></span>
      <i class="cb st-cb">✓</i><span class="st-rep">Representar</span>
      <svg class="ic st-globe"><use href="#globe"/></svg><span class="st-epsg">EPSG:25830</span>
      <svg class="ic st-msg"><use href="#msg"/></svg>
    </footer>

    <div class="menu menu-main">
      <div class="mi">NNJoin<i class="sub"></i></div>
      <div class="mi">Herramientas de <u>g</u>eoproceso<i class="sub"></i></div>
      <div class="mi on">Herramientas de <u>g</u>eometría<i class="sub"></i></div>
      <div class="mi">Herramientas de <u>a</u>nálisis<i class="sub"></i></div>
      <div class="mi">Herramientas de gestión de <u>d</u>atos<i class="sub"></i></div>
      <div class="mi">Herramientas de <u>i</u>nvestigación<i class="sub"></i></div>
    </div>
    <div class="menu menu-sub">
      <div class="mi"><svg class="ic"><use href="#centroid"/></svg>Centroides...</div>
      <div class="mi"><svg class="ic"><use href="#collect"/></svg>Recopilar geometrías...</div>
      <div class="mi"><svg class="ic"><use href="#verts"/></svg>Extraer vértices...</div>
      <div class="mi"><svg class="ic"><use href="#multi"/></svg>Multiparte a monoparte...</div>
      <div class="mi"><svg class="ic"><use href="#simp"/></svg>Simplificar...</div>
      <div class="mi on"><svg class="ic"><use href="#check"/></svg>Comprobar validez...</div>
      <div class="mi"><svg class="ic"><use href="#tri"/></svg>Triangulación de Delaunay...</div>
      <div class="mi"><svg class="ic"><use href="#gear"/></svg>Densificar por conteo...</div>
      <div class="mi"><svg class="ic"><use href="#attrs"/></svg>Agregar atributos de geometría...</div>
      <div class="mi"><svg class="ic"><use href="#linepoly"/></svg>Líneas a polígonos...</div>
      <div class="mi"><svg class="ic"><use href="#polyline"/></svg>Polígonos a líneas...</div>
      <div class="mi"><svg class="ic"><use href="#voronoi"/></svg>Polígonos Voronoi...</div>
    </div>
  </section>
</main>
</body>
</html>
```

FILE: styles.css
```css
* { box-sizing: border-box; }
html, body { margin: 0; padding: 0; background: #fff; }
.sprite { display: none; }

.page {
  position: relative;
  width: 1754px;
  height: 1240px;
  border: 2px solid #f2635c;
  padding: 0 175px;
  overflow: hidden;
}

/* Caption above the screenshot */
.caption {
  height: 238px;
  padding: 91px 0 0 603px;
  font-family: "Noto Sans", "Open Sans", sans-serif;
  font-size: 25px;
  line-height: 30px;
  color: #2d3c64;
}
.caption-line, .caption-strong { margin: 0; white-space: nowrap; }
.caption-line { letter-spacing: -.38px; }
.caption-strong { font-weight: 700; font-size: 24px; letter-spacing: -.35px; }

.pointer {
  position: absolute;
  left: 767px;
  top: 169px;
  width: 20px;
  height: 208px;
  z-index: 5;
}

/* QGIS window */
.window {
  position: relative;
  display: flex;
  flex-direction: column;
  width: 1400px;
  height: 761px;
  background: #f0f0f0;
  font-family: "Liberation Sans", sans-serif;
  font-size: 9.2px;
  letter-spacing: -.3px;
  line-height: 13px;
  color: #1a1a1a;
  filter: blur(.3px);
}
.ic { display: block; width: 14px; height: 14px; flex: none; }

.titlebar {
  display: flex;
  align-items: center;
  height: 18px;
  padding: 0 15px 0 1px;
  background: #fff;
}
.title-text { margin-left: 3px; color: #333; }
.winbtns { display: flex; align-items: center; margin-left: auto; color: #333; }
.wb-min { width: 8px; height: 1px; background: #333; margin-right: 22px; }
.winbtns .ic { width: 12px; height: 12px; margin-right: 21px; }
.wb-close { font-size: 10px; width: 9px; }

.menubar {
  display: flex;
  align-items: center;
  height: 14px;
  padding-left: 2px;
  background: #f0f0f0;
}
.menubar span { padding: 0 5px; line-height: 14px; white-space: nowrap; }
.menubar .on { margin-left: 5px; padding: 0 4px; background: #0078d7; color: #fff; }
.menubar .tight { margin-left: -1px; }

.toolbar {
  display: flex;
  align-items: center;
  height: 23px;
  padding-left: 3px;
  background: linear-gradient(#fcfcfc, #efefef);
  border-bottom: 2px solid #bdbdbd;
}
.c { display: flex; justify-content: center; align-items: center; width: 18px; height: 18px; flex: none; }
.c.sel { background: #dcdcdc; border: 1px solid #bcbcbc; }
.hdl { width: 6px; height: 14px; flex: none; background: radial-gradient(circle, #b4b4b4 .6px, transparent .8px) 0 0 / 3px 3px; }
.hdl.wide { margin: 0 6px 0 2px; }
.hdl.wide2 { margin: 0 3px 0 3px; }
.gap-a { width: 185px; flex: none; }
.gap-b { width: 228px; flex: none; }
.car { width: 0; height: 0; flex: none; margin: 0 2px; border: 3px solid transparent; border-top: 4px solid #666; border-bottom: 0; }

.workspace { display: flex; flex: 1; min-height: 0; }

.dock {
  display: flex;
  flex-direction: column;
  width: 32px;
  padding: 8px 0 0 4px;
  background: linear-gradient(90deg, #fbfbfb, #f0f0f0);
}
.dc { display: flex; align-items: center; height: 17.500px; }
.dc .car { margin-left: 1px; }

.panels { display: flex; flex-direction: column; width: 287px; flex: none; }
.panel { display: flex; flex-direction: column; }
.panel-nav { height: 324px; }
.panel-layers { flex: 1; min-height: 0; }
.panel-title {
  display: flex;
  align-items: center;
  justify-content: space-between;
  margin: 0;
  padding-left: 4px;
  height: 14px;
  font-size: 9.2px;
  font-weight: 400;
}
.panel-btns { display: flex; gap: 2px; margin-right: 2px; }
.panel-btns svg { display: block; width: 9px; height: 9px; }
.panel-tools { display: flex; align-items: center; height: 22px; padding-left: 3px; }
.panel-layers .panel-title { height: 19px; padding-top: 4px; }
.panel-layers .panel-tools { height: 21px; }

.tree, .legend {
  flex: 1;
  margin: 0;
  padding: 1px 0 0;
  list-style: none;
  background: #fff;
  border: 2px solid #b5b5b5;
  border-top-width: 1px;
  border-right-width: 1px;
  border-bottom: 0;
  min-height: 0;
}
.tree li, .legend li {
  display: flex;
  align-items: center;
  height: 13.100px;
  white-space: nowrap;
}
.tree li { padding-left: 3px; }
.tree li .ic { width: 12px; height: 12px; margin-right: 4px; }
.tw { display: block; width: 12px; height: 9px; flex: none; position: relative; }
.tw.r::before { content: ""; position: absolute; left: 2px; top: 1px; border: 3px solid transparent; border-left: 3px solid #777; border-right: 0; }
.tw.d::before { content: ""; position: absolute; left: 2px; top: 2px; border: 3px solid transparent; border-top: 3px solid #777; border-bottom: 0; }

.legend li { padding-left: 4px; }
.cb {
  display: flex;
  align-items: center;
  justify-content: center;
  width: 10px;
  height: 10px;
  flex: none;
  background: #fff;
  border: 1px solid #b8b8b8;
  font-style: normal;
  font-family: "DejaVu Sans", sans-serif;
  font-size: 9px;
  font-weight: 700;
  line-height: 1;
  color: #111;
}
.legend .ic { width: 11px; height: 11px; margin: 0 5px 0 4px; }
.lv2 { padding-left: 30px !important; }
.sym { display: flex; align-items: center; justify-content: center; width: 16px; margin: 0 3px 0 2px; flex: none; }
.pt { width: 4px; height: 4px; border-radius: 50%; background: #9ff2f0; }
.ln { width: 12px; height: 1px; background: #a8f4ee; }
.nm { color: #221133; }
.strong { font-weight: 700; color: #111; letter-spacing: -.45px; }
.selrow { background: #0d7bdc; color: #fff; }
.swatch { width: 11px; height: 12px; margin: 0 4px 0 4px; flex: none; background: #b0985a; border: 1px solid #8a7a50; }
.blank { width: 19px; flex: none; }
.cur { color: #fff; text-decoration: underline; }
.selrow .cb { border-color: #dfe9f4; }

.map { flex: 1; margin-left: 4px; background: #2f3f60; min-width: 0; border-top: 1px solid #9aa0a8; }
.map-svg { display: block; width: 100%; height: 100%; }
.rough { filter: url(#rough); }
.land { fill: #ff9c15; }
.hole { fill: #2f3f60; }
.bound { fill: none; stroke: #33291a; stroke-width: 1; vector-effect: non-scaling-stroke; stroke-linejoin: round; }
.trk-cy { fill: none; stroke: #54e8d0; stroke-width: .7; vector-effect: non-scaling-stroke; }
.trk-red { fill: none; stroke: #e86f50; stroke-width: .9; vector-effect: non-scaling-stroke; }
.trk-thick { fill: none; stroke: #ea7a4e; stroke-width: 1.800; vector-effect: non-scaling-stroke; }
.dot-cy { fill: none; stroke: #1be8d0; stroke-width: 2.800; stroke-linecap: round; vector-effect: non-scaling-stroke; }
.dot-big { fill: none; stroke: #17f4e0; stroke-width: 5; stroke-linecap: round; vector-effect: non-scaling-stroke; }

/* Status bar */
.status {
  display: flex;
  align-items: center;
  height: 22px;
  padding: 0 9px 1px 3px;
  background: #f0f0f0;
  border-bottom: 1px solid #a8a4a0;
  font-size: 8.8px;
  letter-spacing: -.4px;
  white-space: nowrap;
  color: #333;
}
.locator {
  display: flex;
  align-items: center;
  width: 186px;
  height: 15px;
  flex: none;
  background: #fff;
  border: 1px solid #b0b0b0;
  border-radius: 2px;
  color: #888;
}
.locator .ic { margin: 0 3px 0 2px; }
.msg { margin-left: 5px; color: #111; width: 586px; flex: none; }
.st-coord { width: 45px; flex: none; }
.box { display: flex; align-items: center; position: relative; height: 16px; flex: none; padding-left: 2px; background: #fff; border: 1px solid #bdbdbd; }
.w-coord { width: 67px; }
.w-scale { width: 58px; }
.w-mag { width: 64px; margin-right: 6px; }
.w-rot { width: 61px; margin-right: 5px; }
.st-ct { margin: 0 7px 0 3px; }
.st-esc { width: 25px; flex: none; }
.st-lock { margin: 0 4px 0 6px; }
.st-amp { width: 45px; flex: none; }
.st-rot { width: 38px; flex: none; }
.combo { position: absolute; right: 0; top: 0; bottom: 0; width: 16px; background: #f4f4f4; border-left: 1px solid #bdbdbd; }
.combo::after { content: ""; position: absolute; left: 5px; top: 5px; border: 3px solid transparent; border-top: 4px solid #666; border-bottom: 0; }
.spin { position: absolute; right: 0; top: 0; bottom: 0; width: 10px; background: #f2f2f2; }
.spin::before { content: ""; position: absolute; left: 2px; top: 2px; border: 3px solid transparent; border-bottom: 3px solid #666; border-top: 0; }
.spin::after { content: ""; position: absolute; left: 2px; bottom: 2px; border: 3px solid transparent; border-top: 3px solid #666; border-bottom: 0; }
.st-cb { margin-right: 3px; }
.st-rep { width: 46px; flex: none; margin-right: 11px; }
.st-globe { margin-right: 2px; width: 12px; height: 12px; }
.st-epsg { width: 43px; flex: none; }
.st-msg { margin-left: auto; }

/* Open menus */
.menu {
  position: absolute;
  z-index: 3;
  background: #fff;
  border: 1px solid #a0a0a0;
  box-shadow: 2px 2px 2px rgba(0,0,0,.3);
  font-size: 9.2px;
  color: #111;
}
.menu-main { left: 276px; top: 32px; width: 182px; }
.menu-sub { left: 457px; top: 66px; width: 198px; }
.mi { position: relative; display: flex; align-items: center; height: 16.700px; white-space: pre; }
.menu-main .mi { padding-left: 19px; }
.menu-sub .mi { padding-left: 5px; }
.menu-sub .ic { width: 12px; height: 12px; margin-right: 3px; }
.mi u { text-decoration: underline; }
.mi.on { background: #0078d7; color: #fff; box-shadow: inset 0 0 0 1px #3d9be6; }
.sub { position: absolute; right: 2px; top: 5px; border: 3px solid transparent; border-left: 4px solid #555; border-right: 0; }
.mi.on .sub { border-left-color: #fff; }
```
